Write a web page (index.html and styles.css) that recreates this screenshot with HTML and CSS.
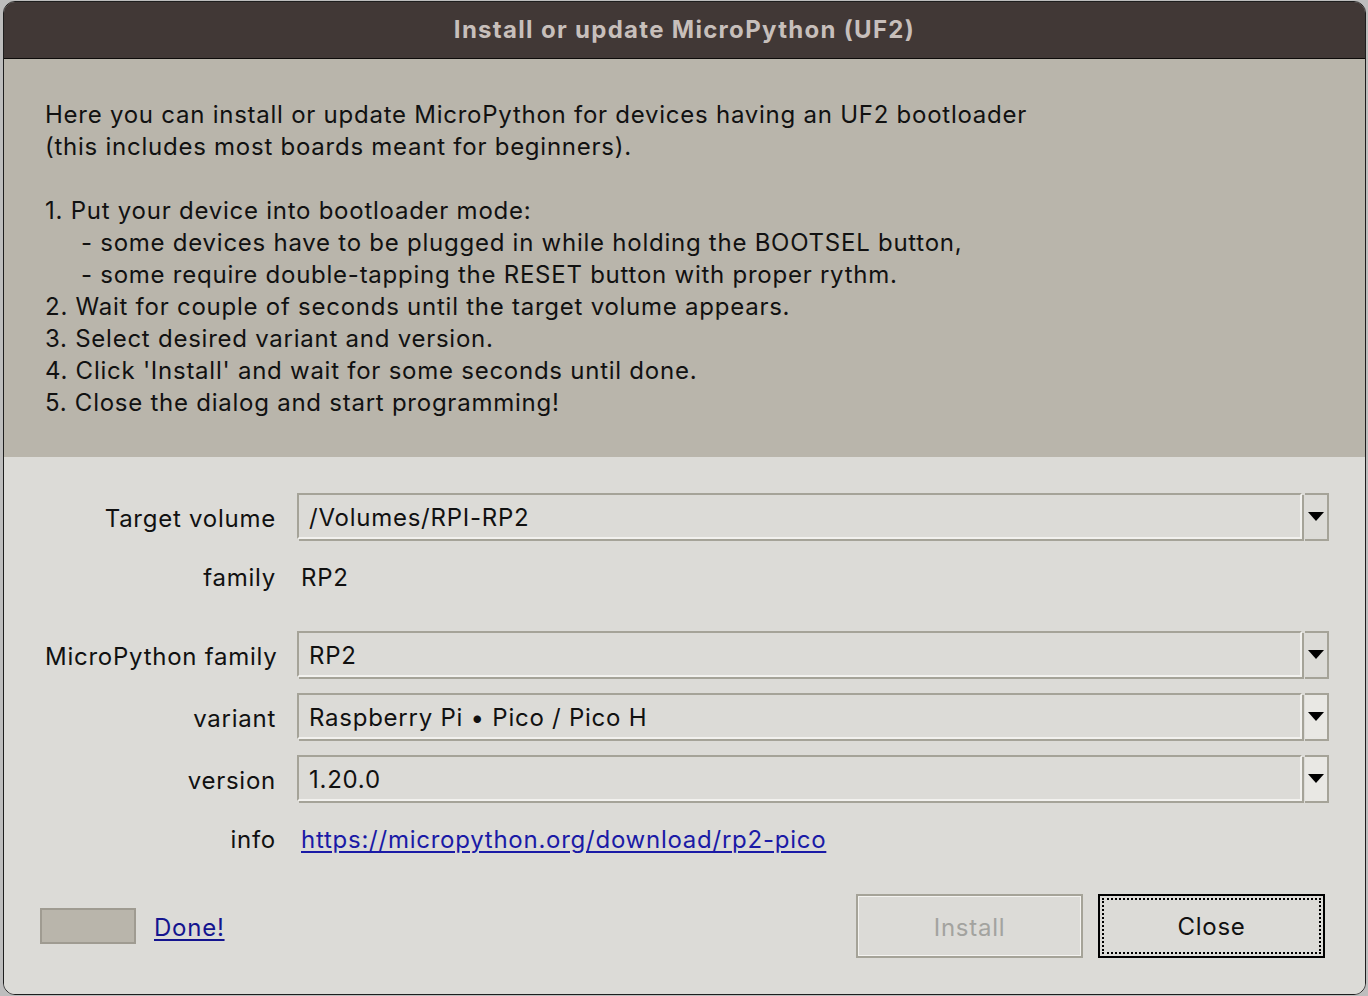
FILE: index.html
```html
<!DOCTYPE html>
<html>
<head>
<meta charset="utf-8">
<link rel="stylesheet" href="styles.css">
</head>
<body>
<div class="window">
  <div class="titlebar">Install or update MicroPython (UF2)</div>
  <div class="intro">
    <div class="line">Here you can install or update MicroPython for devices having an UF2 bootloader</div>
    <div class="line">(this includes most boards meant for beginners).</div>
    <div class="line blank"></div>
    <div class="line">1. Put your device into bootloader mode:</div>
    <div class="line indent">- some devices have to be plugged in while holding the BOOTSEL button,</div>
    <div class="line indent">- some require double-tapping the RESET button with proper rythm.</div>
    <div class="line">2. Wait for couple of seconds until the target volume appears.</div>
    <div class="line">3. Select desired variant and version.</div>
    <div class="line">4. Click 'Install' and wait for some seconds until done.</div>
    <div class="line">5. Close the dialog and start programming!</div>
  </div>
  <div class="form">
    <div class="row row-combo row-first">
      <div class="label">Target volume</div>
      <div class="combo">
        <div class="field">/Volumes/RPI-RP2</div>
        <div class="arrow"><span class="tri"></span></div>
      </div>
    </div>
    <div class="row row-text">
      <div class="label">family</div>
      <div class="value">RP2</div>
    </div>
    <div class="row row-combo row-after-text">
      <div class="label">MicroPython family</div>
      <div class="combo">
        <div class="field">RP2</div>
        <div class="arrow"><span class="tri"></span></div>
      </div>
    </div>
    <div class="row row-combo">
      <div class="label">variant</div>
      <div class="combo">
        <div class="field">Raspberry Pi • Pico / Pico H</div>
        <div class="arrow arrow-light"><span class="tri"></span></div>
      </div>
    </div>
    <div class="row row-combo">
      <div class="label">version</div>
      <div class="combo">
        <div class="field">1.20.0</div>
        <div class="arrow arrow-light"><span class="tri"></span></div>
      </div>
    </div>
    <div class="row row-text">
      <div class="label">info</div>
      <div class="value"><a class="link" href="#">https://micropython.org/download/rp2-pico</a></div>
    </div>
    <div class="footer">
      <div class="progress"></div>
      <a class="link done" href="#">Done!</a>
      <div class="spacer"></div>
      <div class="btn btn-disabled">Install</div>
      <div class="btn btn-focus"><span class="focus-ring">Close</span></div>
    </div>
  </div>
</div>
</body>
</html>
```
FILE: styles.css
```css
html, body {
  margin: 0;
  padding: 0;
}
body {
  background: #bdbdbd;
  font-family: "Inter", "Noto Sans", "Liberation Sans", sans-serif;
  font-size: 24px;
  letter-spacing: 0.75px;
  color: #111;
  width: 1368px;
  height: 996px;
  overflow: hidden;
}
.window {
  margin: 1px 0 0 3px;
  width: 1363px;
  height: 994px;
  box-sizing: border-box;
  border: 1px solid #1e1e1e;
  border-radius: 12px;
  overflow: hidden;
  display: flex;
  flex-direction: column;
  background: #dcdbd7;
}
.titlebar {
  height: 57px;
  flex: none;
  background: #413836;
  border-bottom: 1px solid #0d0b0a;
  color: #c7bfbb;
  font-weight: 700;
  font-size: 24px;
  letter-spacing: 1.3px;
  display: flex;
  align-items: center;
  justify-content: center;
  padding-bottom: 2px;
  box-sizing: border-box;
}
.intro {
  flex: none;
  background: #b9b5ab;
  padding: 40px 40px 38px 41px;
}
.line {
  height: 32px;
  line-height: 32px;
  white-space: nowrap;
}
.indent {
  padding-left: 36px;
}
.form {
  flex: 1;
  background: #dcdbd7;
  padding: 0 36px 0 41px;
  display: flex;
  flex-direction: column;
}
.row {
  display: flex;
  align-items: center;
}
.label {
  width: 231px;
  flex: none;
  text-align: right;
  margin-right: 21px;
  white-space: nowrap;
}
.row-combo {
  height: 48px;
  margin-top: 14px;
}
.row-first {
  margin-top: 36px;
}
.row-after-text {
  margin-top: 20px;
}
.row-text {
  height: 70px;
  padding-top: 2px;
  box-sizing: border-box;
}
.row-combo .label {
  padding-top: 2px;
}
.value {
  padding-left: 4px;
}
.combo {
  flex: 1;
  height: 48px;
  display: flex;
}
.field {
  flex: 1;
  box-sizing: border-box;
  height: 46px;
  border-top: 2px solid #a5a398;
  border-left: 2px solid #a5a398;
  border-right: 2px solid #f2f1ee;
  border-bottom: 2px solid #f2f1ee;
  box-shadow: 2px 2px 0 #a5a398;
  padding-left: 10px;
  padding-top: 2px;
  display: flex;
  align-items: center;
  white-space: nowrap;
}
.arrow {
  width: 24px;
  flex: none;
  margin-left: 3px;
  box-sizing: border-box;
  height: 48px;
  border-top: 2px solid #a5a398;
  border-right: 2px solid #a5a398;
  border-bottom: 2px solid #a5a398;
  display: flex;
  align-items: center;
  justify-content: center;
}
.arrow-light {
  background: #e9e8e4;
}
.tri {
  width: 0;
  height: 0;
  border-left: 8px solid transparent;
  border-right: 8px solid transparent;
  border-top: 9px solid #000;
  margin-top: -2px;
}
.link {
  color: #1a1aa6;
  text-decoration: underline;
  text-underline-offset: 3px;
}
.footer {
  margin-top: 21px;
  height: 64px;
  display: flex;
  align-items: center;
  margin-left: -5px;
  margin-right: 4px;
}
.progress {
  width: 92px;
  height: 32px;
  background: #b9b5ab;
  border: 2px solid #9f9b91;
  margin-right: 18px;
}
.done {
  color: #14148f;
  padding-top: 2px;
}
.spacer {
  flex: 1;
}
.btn {
  width: 227px;
  height: 64px;
  box-sizing: border-box;
  display: flex;
  align-items: center;
  justify-content: center;
  padding-top: 2px;
}
.btn-disabled {
  border: 2px solid #a5a398;
  box-shadow: inset 1px 1px 0 #f4f3f0, inset -1px -1px 0 #f4f3f0;
  color: #a3a39f;
  margin-right: 15px;
}
.btn-focus {
  border: 2px solid #000;
  padding: 2px;
}
.focus-ring {
  flex: 1;
  align-self: stretch;
  border: 2px dotted #000;
  display: flex;
  align-items: center;
  justify-content: center;
}
```
